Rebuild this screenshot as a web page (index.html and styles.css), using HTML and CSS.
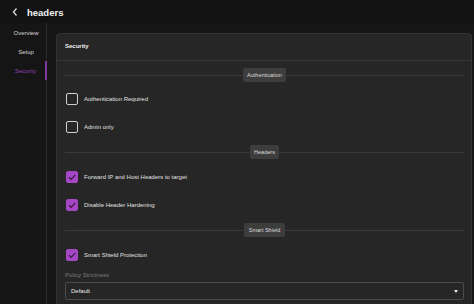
FILE: index.html
```html
<!DOCTYPE html>
<html>
<head>
<meta charset="utf-8">
<link rel="stylesheet" href="styles.css">
</head>
<body>
<div class="topbar">
  <span class="back"><svg width="8" height="10" viewBox="0 0 8 10"><path d="M5.5 1.5 L2.5 5 L5.5 8.5" fill="none" stroke="#ddd" stroke-width="1.3"/></svg></span>
  <span class="title">headers</span>
</div>
<div class="main">
  <nav class="sidebar">
    <div class="nav-item">Overview</div>
    <div class="nav-item">Setup</div>
    <div class="nav-item active">Security</div>
  </nav>
  <div class="content">
    <div class="card">
      <div class="card-head">Security</div>
      <div class="card-body">
        <div class="divider"><span class="badge">Authentication</span></div>
        <label class="row first"><span class="box"></span><span>Authentication Required</span></label>
        <label class="row"><span class="box"></span><span>Admin only</span></label>
        <div class="divider"><span class="badge">Headers</span></div>
        <label class="row first"><span class="box on"><svg width="10" height="10" viewBox="0 0 10 10"><path d="M2 5.2 L4.2 7.3 L8.3 2.8" fill="none" stroke="#3a1a44" stroke-width="1.2"/></svg></span><span>Forward IP and Host Headers to target</span></label>
        <label class="row"><span class="box on"><svg width="10" height="10" viewBox="0 0 10 10"><path d="M2 5.2 L4.2 7.3 L8.3 2.8" fill="none" stroke="#3a1a44" stroke-width="1.2"/></svg></span><span>Disable Header Hardening</span></label>
        <div class="divider"><span class="badge">Smart Shield</span></div>
        <label class="row first"><span class="box on"><svg width="10" height="10" viewBox="0 0 10 10"><path d="M2 5.2 L4.2 7.3 L8.3 2.8" fill="none" stroke="#3a1a44" stroke-width="1.2"/></svg></span><span>Smart Shield Protection</span></label>
        <div class="field-label">Policy Strictness</div>
        <div class="select"><span>Default</span><span class="caret"></span></div>
      </div>
    </div>
  </div>
</div>
</body>
</html>
```
FILE: styles.css
```css
* { box-sizing: border-box; }
html, body { margin: 0; height: 100%; }
body {
  background: #151515;
  color: #e6e6e6;
  font-family: "Liberation Sans", Arial, sans-serif;
  font-size: 6px;
  overflow: hidden;
}
.topbar {
  height: 23px;
  display: flex;
  align-items: center;
  padding: 1px 0 0 11px;
  background: #121212;
}
.back { width: 15px; display: flex; align-items: center; }
.title { font-weight: bold; font-size: 9.5px; color: #f2f2f2; margin-left: 1px; }
.main { display: flex; height: 281px; overflow: hidden; }
.sidebar {
  width: 47px;
  border-right: 1px solid #2b2b2b;
  flex-shrink: 0;
}
.nav-item {
  height: 19px;
  display: flex;
  align-items: center;
  justify-content: center;
  color: #d8d8d8;
  padding-left: 6px;
}
.nav-item.active {
  color: #8f3fb0;
  border-right: 2px solid #7e3a9c;
  margin-right: -1px;
}
.content { flex: 1; padding: 10px 2px 0 9px; }
.card {
  background: #262626;
  border: 1px solid #333;
  border-radius: 4px;
  height: 290px;
}
.card-head {
  height: 27px;
  display: flex;
  align-items: center;
  padding: 0 0 2px 8px;
  font-weight: bold;
  color: #f0f0f0;
  border-bottom: 1px solid #383838;
}
.card-body { padding: 0 7px 0 8px; }
.divider {
  height: 14px;
  margin-top: 12px;
  display: flex;
  align-items: center;
  justify-content: center;
  position: relative;
}
.card-body > .divider:first-child { margin-top: 7px; }
.divider::before {
  content: "";
  position: absolute;
  left: 0; right: 0; top: 50%;
  border-top: 1px solid #3a3a3a;
}
.badge {
  position: relative;
  background: #3d3d3d;
  color: #dcdcdc;
  font-size: 5.5px;
  height: 14px;
  padding: 0 4.5px;
  display: flex;
  align-items: center;
  border-radius: 2px;
}
.row {
  display: flex;
  align-items: center;
  height: 12px;
  margin-top: 16px;
  gap: 6px;
  color: #e0e0e0;
}
.row.first { margin-top: 12px; }
.card-body > .divider:first-child + .row { margin-top: 11px; }
.box {
  width: 12px; height: 12px;
  border: 1.5px solid #cfcfcf;
  border-radius: 2px;
  display: flex;
  align-items: center;
  justify-content: center;
  margin-left: 1px;
}
.box.on { background: #a546c4; border-color: #a546c4; }
.field-label { margin-top: 10px; color: #7a7a7a; height: 8px; line-height: 8px; }
.select {
  margin-top: 3px;
  height: 18px;
  border: 1px solid #4a4a4a;
  border-radius: 2px;
  display: flex;
  align-items: center;
  justify-content: space-between;
  padding: 0 5px;
  color: #e6e6e6;
}
.caret {
  width: 0; height: 0;
  border-left: 2.5px solid transparent;
  border-right: 2.5px solid transparent;
  border-top: 3px solid #e6e6e6;
}
```
